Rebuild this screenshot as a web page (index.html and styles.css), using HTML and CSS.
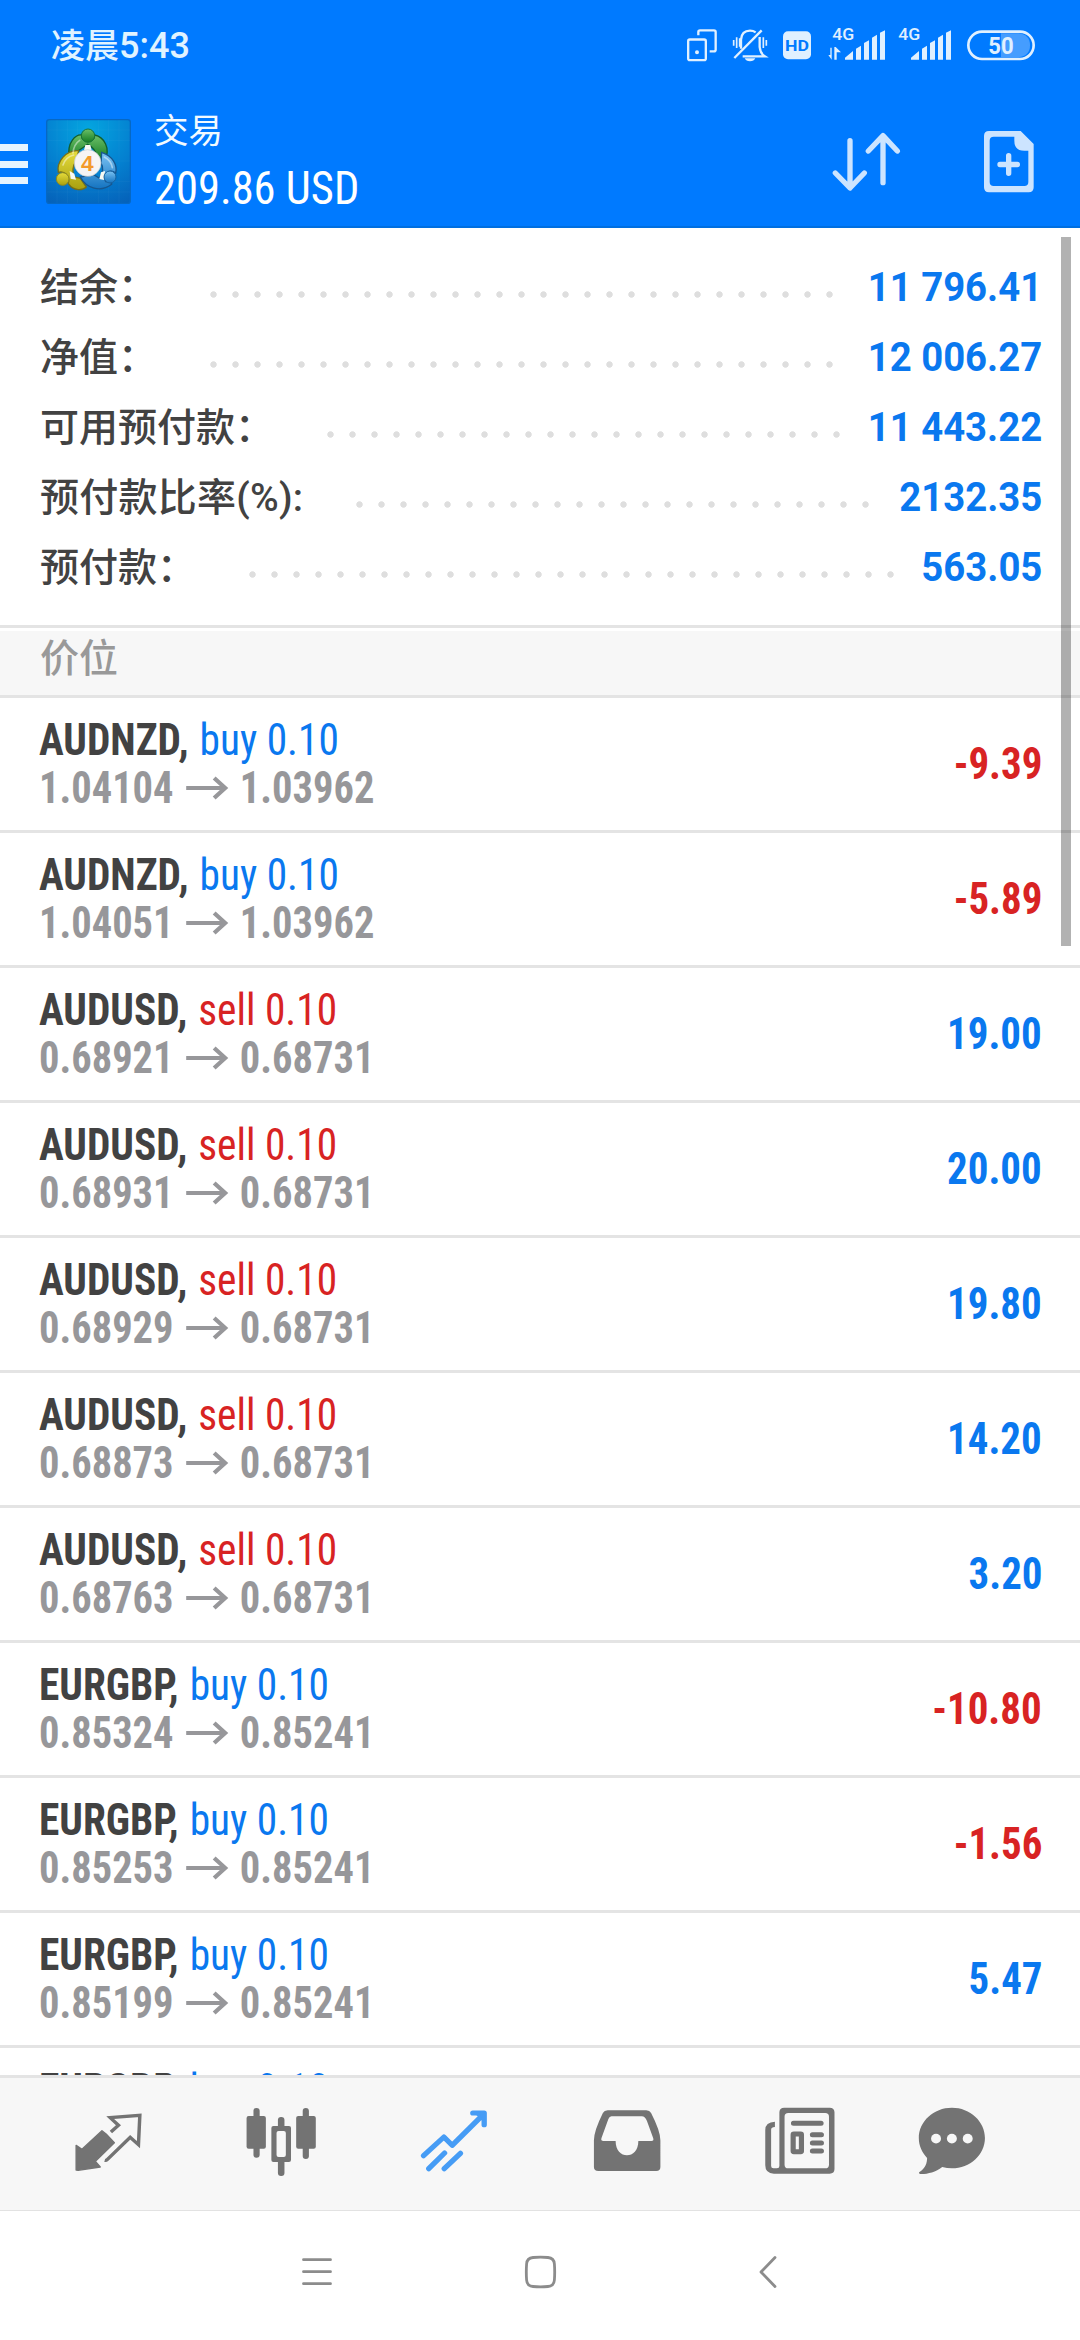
FILE: index.html
```html
<!DOCTYPE html>
<html lang="zh-CN">
<head>
<meta charset="utf-8">
<title>交易</title>
<link rel="stylesheet" href="styles.css">
</head>
<body>
<div class="screen">
  <header class="top">
    <div class="status">
      <div class="clock"><span class="clock-cjk">凌晨</span>5:43</div>
      <div class="status-icons">
        <svg width="30" height="36.67" viewBox="141 80 90 110" fill="none" stroke="#e0f0ff" stroke-width="7"><rect x="144.500" y="117.500" width="53" height="62" rx="5"/><path d="M175 105V95q0-5 5-5h42q5 0 5 5v53q0 5-5 5h-13"/><circle cx="171" cy="156" r="3" stroke-width="6"/></svg>
        <svg width="34" height="36.67" viewBox="279 80 102 110" fill="none" stroke="#e0f0ff" stroke-width="7"><path d="M303 145V118q2-27 27-27q10 0 17 5M359 110v30q2 20 15 28H308"/><path d="M283 173L365 90"/><path d="M281 119v17M290 111v32M299 114v25M379 119v17M370 111v32" stroke-width="5"/><path d="M314 174h32q-4 9-16 9t-16-9z" fill="#e0f0ff" stroke="none"/></svg>
        <svg width="28" height="36.67" viewBox="429 80 84 110"><rect x="429" y="93" width="84" height="84" rx="15" fill="#e0f0ff"/><text x="471" y="153" text-anchor="middle" class="t-hd" textLength="72" lengthAdjust="spacingAndGlyphs">HD</text></svg>
        <svg width="56" height="36.67" viewBox="561 80 168 110" fill="#e0f0ff"><text x="577" y="120" class="t-4g" textLength="66" lengthAdjust="spacingAndGlyphs">4G</text><path d="M615 178v-6l24-20v26zM648 178v-33l15-9v42zM672 178v-50l15-8v58zM696 178v-66l15-9v75zM720 178v-81l15-7v88z"/><path d="M575 142v36l-10-14h6v-22zM583 178v-38l4 0l16 16h-13v22z"/></svg>
        <svg width="52" height="36.67" viewBox="777 80 156 110" fill="#e0f0ff"><text x="775" y="120" class="t-4g" textLength="66" lengthAdjust="spacingAndGlyphs">4G</text><path d="M813 178v-6l24-20v26zM846 178v-33l15-9v42zM870 178v-50l15-8v58zM894 178v-66l15-9v75zM918 178v-81l15-7v88z"/></svg>
        <svg width="68" height="36.67" viewBox="981 80 204 110"><path d="M1083 99h53q34 4 34 36t-34 36h-53z" fill="#459dff"/><rect x="985" y="94" width="196" height="82" rx="41" fill="none" stroke="#e0f0ff" stroke-width="8"/><text x="1083" y="162" text-anchor="middle" class="t-bat" textLength="76" lengthAdjust="spacingAndGlyphs">50</text></svg>
      </div>
    </div>
    <div class="bar">
      <div class="burger"><i></i><i></i><i></i></div>
      <svg class="logo" width="85" height="85" viewBox="47 58 255 255">
        <defs>
          <radialGradient id="bg" cx=".5" cy=".12" r="1"><stop offset="0" stop-color="#04a6e0"/><stop offset=".55" stop-color="#0480d0"/><stop offset="1" stop-color="#0560b8"/></radialGradient>
          <linearGradient id="g" x2="0" y2="1"><stop offset="0" stop-color="#6cc069"/><stop offset="1" stop-color="#137c22"/></linearGradient>
          <linearGradient id="y" x2="0" y2="1"><stop offset="0" stop-color="#e6dc3c"/><stop offset="1" stop-color="#a8a010"/></linearGradient>
          <linearGradient id="b" x2="0" y2="1"><stop offset="0" stop-color="#7cc4f4"/><stop offset="1" stop-color="#1473c0"/></linearGradient>
        </defs>
        <rect x="49" y="60" width="251" height="251" rx="8" fill="url(#bg)" stroke="#0668c4" stroke-width="4"/>
        <path d="M80 60V310M111 60V310M142 60V310M204 60V310M235 60V310M266 60V310M49 91H300M49 122H300M49 184H300M49 246H300M49 277H300" stroke="#fff" stroke-opacity=".06" stroke-width="2"/>
        <path d="M117 176C108 126 138 104 154 106C150 130 196 130 193 106C222 112 241 146 224 182L200 174C198 150 184 140 172 134C160 143 148 150 140 156Z" fill="url(#g)" stroke="#135f2a" stroke-width="4"/>
        <path d="M145 153C106 150 78 188 84 218C100 212 120 228 114 252C130 276 158 272 168 262L150 236L132 232C124 216 128 198 138 182Z" fill="url(#y)" stroke="#756f1a" stroke-width="4"/>
        <path d="M214 158C246 168 262 196 256 220C238 206 216 222 226 246C240 246 246 252 244 254C210 280 168 266 150 232L190 225L208 236C218 218 220 202 212 190Z" fill="url(#b)" stroke="#17568e" stroke-width="4"/>
        <path d="M165 136h15l4 16h-23zM118 214l14 8 5 18-16-3zM224 214l-12 4-5 20 15 3z" fill="#f7faf4"/>
        <path d="M128 160q2-26 20-38M98 196q8-24 32-30M222 172q20 10 24 32" fill="none" stroke="#fff" stroke-opacity=".45" stroke-width="5" stroke-linecap="round"/>
        <circle cx="173" cy="108" r="20" fill="url(#g)" stroke="#187439" stroke-width="3"/>
        <circle cx="97" cy="238" r="19" fill="url(#y)" stroke="#8c8920" stroke-width="3"/>
        <circle cx="239" cy="232" r="18" fill="url(#b)" stroke="#1862a0" stroke-width="3"/>
        <circle cx="172" cy="190" r="40" fill="#f6f4f4" stroke="#c5ccd0" stroke-width="2"/>
        <text x="171" y="214" text-anchor="middle" class="t-four">4</text>
      </svg>
      <div class="titles">
        <div class="title">交易</div>
        <div class="profit cond">209.86 USD</div>
      </div>
      <svg class="act-sort" width="70" height="64" viewBox="572 392 210 192" fill="none" stroke="#cce4ff" stroke-width="16" stroke-linecap="round" stroke-linejoin="round"><path d="M626 421V562M582 518l44 45 43-45M725 547V406M681 452l44-46 43 46"/></svg>
      <svg class="act-new" width="50" height="62" viewBox="1030 394 150 186"><path fill="#cce4ff" fill-rule="evenodd" d="M1045 394h95l39 39v130q0 15-15 15h-119q-15 0-15-15V409q0-15 15-15zM1059 411q-12 0-12 12v124q0 12 12 12h92q12 0 12-12V453h-12q-30 0-30-30v-12z"/><path d="M1104 468v53M1078 494.500h52" stroke="#cce4ff" stroke-width="16" stroke-linecap="round"/></svg>
    </div>
  </header>

  <main class="content">
    <section class="summary">
      <div class="sum"><span>结余：</span><i class="dots" style="width:638px"></i><b>11 796.41</b></div>
      <div class="sum"><span>净值：</span><i class="dots" style="width:638px"></i><b>12 006.27</b></div>
      <div class="sum"><span>可用预付款：</span><i class="dots" style="width:528px"></i><b>11 443.22</b></div>
      <div class="sum"><span class="ratio">预付款比率(%):</span><i class="dots" style="width:528px"></i><b>2132.35</b></div>
      <div class="sum"><span>预付款：</span><i class="dots" style="width:660px"></i><b>563.05</b></div>
    </section>
    <h2 class="section">价位</h2>
    <ul class="list" id="list"></ul>
    <div class="scrollbar"></div>
  </main>

  <nav class="tabs">
    <svg width="80" height="80" viewBox="197.400 192 232.300 240" preserveAspectRatio="none"><path fill="#737373" stroke="#737373" stroke-width="4" stroke-linejoin="round" d="M221 316l17 12 58-56 12 10 24 26-55 56 14 17-64 10-6-1z"/><path fill="none" stroke="#737373" stroke-width="10" d="M322 276l22-20-24-23 86-7-4 88-24-22-66 66q-4 4-8 3"/></svg>
    <svg width="80" height="80" viewBox="699.800 192 232.300 240" preserveAspectRatio="none"><g fill="#737373"><rect x="736" y="204" width="18" height="149" rx="9"/><rect x="716" y="228" width="56" height="98" rx="6"/><rect x="879" y="204" width="18" height="153" rx="9"/><rect x="860" y="228" width="57" height="98" rx="6"/><rect x="807" y="231" width="19" height="177" rx="9"/><rect x="788" y="258" width="57" height="108" rx="6"/></g><rect x="803" y="273" width="27" height="78" rx="6" fill="#f7f7f7"/></svg>
    <svg width="80" height="80" viewBox="1202.200 192 232.300 240" preserveAspectRatio="none" fill="none" stroke="#469cf5" stroke-width="15.500" stroke-linecap="round" stroke-linejoin="round"><path d="M1230 347l59-56 24 25 90-92M1373 219h33v35M1245 386l46-47M1290 386l47-46"/><path d="M1384 222l20 18V220z" fill="#469cf5" stroke-width="6"/></svg>
    <svg width="80" height="80" viewBox="137.900 192 232.300 240" preserveAspectRatio="none"><path fill="#737373" fill-rule="evenodd" d="M198 211h112q10 0 14 8q27 54 27 82v80q0 12-12 12H171q-13 0-13-12v-80q0-28 26-82q4-8 14-8zM209 229q-6 0-9 8l-20 57q-3 9 6 9h35c0 28 16 43 33 43s33-15 33-43h38q8 0 5-9l-18-51q-5-14-15-14z"/></svg>
    <svg width="80" height="80" viewBox="641.700 192 232.300 240" preserveAspectRatio="none"><path fill="#737373" fill-rule="evenodd" d="M712 203h132q14 0 14 14v170q0 14-14 14H682q-25 0-25-25V270q0-24 28-25v16q-11 0-11 8v109q0 7 7 7h10q7 0 7-7V217q0-14 14-14zM724 219q-11 0-11 11v144q0 11 11 11h107q11 0 11-11V230q0-11-11-11z"/><path d="M739 250h80M794 284h26M794 309h26M794 333h26" stroke="#737373" stroke-width="15" stroke-linecap="round"/><rect x="738" y="282" width="24" height="53" rx="2" fill="none" stroke="#737373" stroke-width="15"/></svg>
    <svg width="80" height="80" viewBox="1083.200 192 232.300 240" preserveAspectRatio="none"><path fill="#737373" d="M1199 203c53 0 96 41 96 91s-43 91-96 91q-14 0-28-4c-20 16-45 22-64 21q-6-2-2-6c18-12 22-28 22-42c-15-17-24-36-24-60c0-50 43-91 96-91z"/><g fill="#f7f7f7"><circle cx="1153" cy="296" r="14.500"/><circle cx="1199" cy="296" r="14.500"/><circle cx="1245" cy="296" r="14.500"/></g></svg>
  </nav>

  <footer class="sysnav">
    <svg width="30" height="32" viewBox="0 0 30 32" stroke="#8c8c8c" stroke-width="2.800" stroke-linecap="round"><path d="M1.500 3.700h27M1.500 15.700h27M1.500 27.700h27"/></svg>
    <svg width="31" height="32" viewBox="0 0 31 32" fill="none" stroke="#8c8c8c" stroke-width="2.800"><path d="M8 1.500q7.500-.6 15 0q6 .5 6.400 6.500q.6 8 0 16q-.4 6-6.400 6.500q-7.500.6-15 0q-6-.5-6.400-6.500q-.6-8 0-16q.4-6 6.400-6.500z"/></svg>
    <svg width="18" height="32" viewBox="0 0 18 32" fill="none" stroke="#8c8c8c" stroke-width="2.800" stroke-linecap="round" stroke-linejoin="round"><path d="M16 1.500L2 16l14 14.500"/></svg>
  </footer>
</div>
<script src="app.js"></script>
</body>
</html>
```

FILE: app.js
```js
const positions = [
  ["AUDNZD", "buy", "1.04104", "1.03962", "-9.39"],
  ["AUDNZD", "buy", "1.04051", "1.03962", "-5.89"],
  ["AUDUSD", "sell", "0.68921", "0.68731", "19.00"],
  ["AUDUSD", "sell", "0.68931", "0.68731", "20.00"],
  ["AUDUSD", "sell", "0.68929", "0.68731", "19.80"],
  ["AUDUSD", "sell", "0.68873", "0.68731", "14.20"],
  ["AUDUSD", "sell", "0.68763", "0.68731", "3.20"],
  ["EURGBP", "buy", "0.85324", "0.85241", "-10.80"],
  ["EURGBP", "buy", "0.85253", "0.85241", "-1.56"],
  ["EURGBP", "buy", "0.85199", "0.85241", "5.47"],
  ["EURGBP", "buy", "", "", ""]
];
const arrow = '<svg class="arrow" width="45.6" height="24" viewBox="0 0 42 24" preserveAspectRatio="none" fill="none" stroke="#97979a" stroke-width="4.2"><path d="M0 12H39"/><path d="M28 2L39 12L28 22"/></svg>';
document.getElementById("list").innerHTML = positions.map(([symbol, side, open, now, profit]) => `
  <li class="row cond">
    <div class="deal">
      <div class="line"><b>${symbol},</b> <span class="${side}">${side} 0.10</span></div>
      <div class="line price">${open ? `<span>${open}</span>${arrow}<span>${now}</span>` : ""}</div>
    </div>
    <b class="pl ${profit.startsWith("-") ? "loss" : "gain"}">${profit}</b>
  </li>`).join("");
```

FILE: styles.css
```css
* { box-sizing: border-box; margin: 0; padding: 0; }
body { font-family: Roboto, "Noto Sans CJK SC", sans-serif; background: #fff; color: #424242; }
.screen { width: 1080px; height: 2340px; display: flex; flex-direction: column; overflow: hidden; }
svg { display: block; overflow: visible; flex: none; }
.cond { font-family: "Roboto Condensed", Roboto, "Noto Sans CJK SC", sans-serif; font-stretch: 75%; }

.top { height: 228px; flex: none; background: #007aff; border-bottom: 2px solid #006fe0; color: #fff; }
.status { height: 90px; display: flex; justify-content: space-between; padding: 0 45px 0 51px; }
.clock { font-size: 36px; font-weight: 500; line-height: 92px; color: #e0f3ff; }
.clock-cjk { font-size: 34px; }
.status-icons { display: flex; gap: 16px; padding-top: 27px; }
.t-hd { font: 700 46px Roboto, sans-serif; fill: #007aff; }
.t-4g { font: 500 48px Roboto, sans-serif; }
.t-bat { font: 700 70px Roboto, sans-serif; fill: #e0f0ff; }
.t-four { font: 700 68px "Liberation Sans", sans-serif; fill: #f39a2b; }

.bar { height: 136px; display: flex; align-items: flex-start; padding-right: 46px; }
.burger { width: 28px; margin-top: 54px; display: flex; flex-direction: column; gap: 9.500px; }
.burger i { height: 7px; background: #e6f4ff; }
.logo { margin: 29px 0 0 17.500px; }
.titles { margin-left: 23.500px; padding-top: 18px; flex: 1; }
.title { font-size: 34.500px; line-height: 46px; color: #f2faff; }
.profit { font-size: 47px; line-height: 56px; margin-top: 6px; transform: scaleX(.947); transform-origin: left; }
.act-sort { margin: 41px 82px 0 0; }
.act-new { margin-top: 41px; }

.content { position: relative; flex: none; height: 1847px; overflow: hidden; }
.summary { height: 400px; padding: 25px 38px 0 40px; border-bottom: 3px solid #e4e4e4; }
.sum { height: 70px; display: flex; align-items: center; font-size: 39px; font-weight: 500; line-height: 70px; }
.ratio { letter-spacing: .25px; }
.dots { height: 7px; margin: 12px 0 0 53px; flex: none; background: radial-gradient(circle at 3.500px 3.500px, #dedede 2.800px, transparent 3.600px) 0 0 / 22px 7px repeat-x; }
.sum b { margin-left: auto; font-size: 40px; font-weight: 700; color: #0a78ef; white-space: nowrap; transform: scaleX(.958); transform-origin: right; }
.section { height: 70px; margin: 0; padding-left: 40px; background: #f7f7f7; border-top: 3px solid #fff; border-bottom: 3px solid #e4e4e4; font-size: 39px; font-weight: 500; line-height: 56px; color: #999; }
.list { list-style: none; }
.row { height: 135px; display: flex; justify-content: space-between; padding: 17px 38px 0 39px; border-bottom: 3px solid #e4e4e4; font-size: 44px; }
.line { height: 48px; line-height: 50px; white-space: pre; transform: scaleX(.94); transform-origin: left; }
.buy, .gain { color: #0a78ef; }
.sell, .loss { color: #d82323; }
.line .buy, .line .sell { margin-left: 1.500px; }
.price { display: flex; align-items: center; padding-top: 2px; font-weight: 700; color: #97979a; transform: scaleX(.92); }
.arrow { margin: 0 12.500px 0 14px; }
.pl { line-height: 99px; transform: scaleX(.93); transform-origin: right; }
.scrollbar { position: absolute; left: 1061px; top: 9px; width: 10px; height: 709px; background: rgba(0, 0, 0, .3); }

.tabs { flex: none; height: 136px; display: grid; grid-template-columns: repeat(5, 173px) 131px; padding-left: 21.500px; align-items: center; justify-items: center; background: #f7f7f7; border-top: 3px solid #e4e4e4; border-bottom: 1px solid #e2e2e2; }
.sysnav { flex: none; height: 129px; display: flex; padding: 45px 0 0 302px; }
.sysnav svg:nth-child(2) { margin-left: 192.500px; }
.sysnav svg:nth-child(3) { margin-left: 203px; }
```
